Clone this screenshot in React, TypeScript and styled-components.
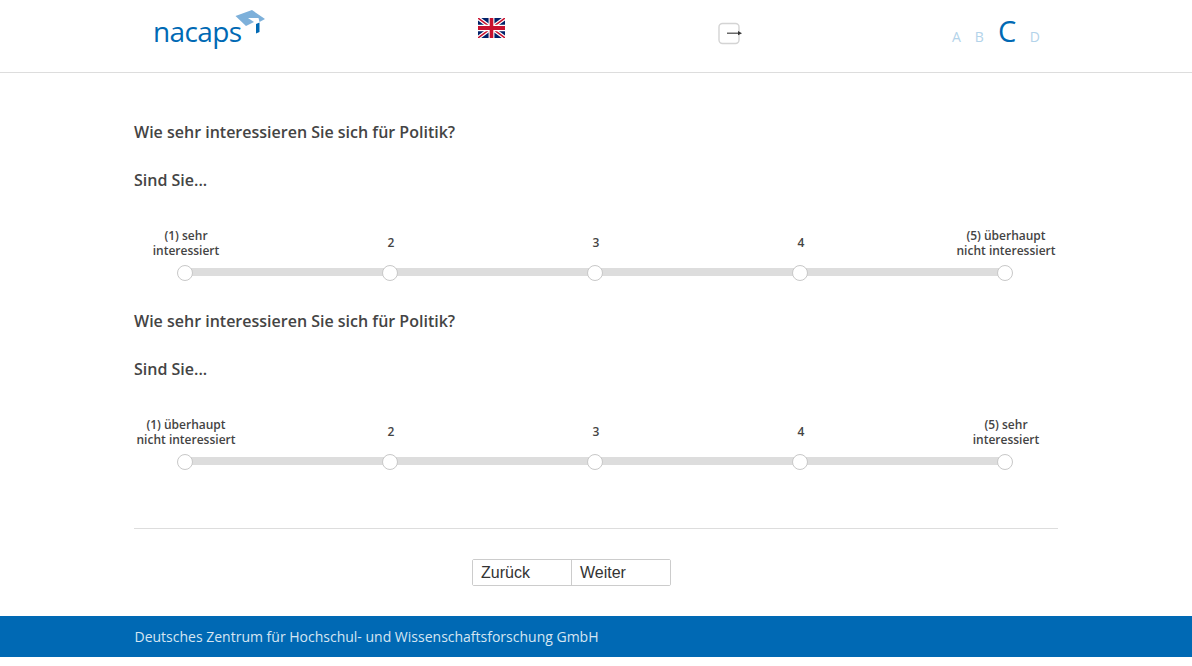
import React from 'react';
import styled, { createGlobalStyle } from 'styled-components';

const GlobalStyle = createGlobalStyle`
	html, body {
		margin: 0;
		padding: 0;
		background: #fff;
		font-family: 'Open Sans', sans-serif;
	}
`;

const Header = styled.header`
	box-sizing: border-box;
	height: 73px;
	border-bottom: 1px solid #dddddd;
	display: grid;
	grid-template-columns: 344px 240px 233px 1fr;
	padding-left: 134px;
`;

const Logo = styled.div`
	position: relative;
	padding: 12px 0 0 19px;
	color: #0069b4;
	font-family: 'Open Sans', sans-serif;
	font-size: 28px;
	line-height: 38px;
	letter-spacing: -0.6px;
	svg {
		position: absolute;
		left: 101px;
		top: 10px;
	}
`;

const FlagCell = styled.div`
	padding-top: 18px;
	svg {
		display: block;
	}
`;

const ExitCell = styled.div`
	padding-top: 22px;
	svg {
		display: block;
	}
`;

const Levels = styled.div`
	display: flex;
	align-items: baseline;
	height: 46px;
	padding: 12px 0 0 1px;
	box-sizing: border-box;
`;

const Level = styled.span<{ $active?: boolean }>`
	color: ${({ $active }) => ($active ? '#0069b4' : '#b3d3ea')};
	font-size: ${({ $active }) => ($active ? '29px' : '14px')};
	line-height: 38px;
	margin-right: ${({ $active }) => ($active ? '13.5px' : '14px')};
`;

const Main = styled.main`
	width: 924px;
	margin-left: 134px;
	padding-top: 48px;
`;

const Question = styled.h2`
	margin: 0 0 26px;
	color: #444444;
	font-size: 16px;
	font-weight: 600;
	line-height: 22px;
`;

const Scale = styled.div`
	padding-top: 11px;
	height: 79px;
	margin-bottom: 3px;
`;

const Labels = styled.div`
	display: flex;
	justify-content: space-between;
	padding: 0 2px;
	height: 29px;
	align-items: center;
`;

const Label = styled.div`
	width: 100px;
	text-align: center;
	color: #444444;
	font-size: 12px;
	font-weight: 600;
	line-height: 15px;
	white-space: nowrap;
`;

const Track = styled.div`
	position: relative;
	margin: 8px 45px 0 43px;
	height: 16px;
	display: flex;
	justify-content: space-between;
	&::before {
		content: '';
		position: absolute;
		left: 8px;
		right: 8px;
		top: 3px;
		height: 8px;
		background: #dddddd;
	}
`;

const Handle = styled.div`
	position: relative;
	box-sizing: border-box;
	width: 16px;
	height: 16px;
	border: 1px solid #c8c8c8;
	border-radius: 50%;
	background: #fff;
`;

const Divider = styled.hr`
	margin: 32px 0 30px;
	border: none;
	border-top: 1px solid #dddddd;
`;

const Buttons = styled.div`
	display: flex;
	width: 199px;
	height: 27px;
	margin-left: 338px;
	box-sizing: border-box;
	border: 1px solid #cccccc;
	border-radius: 2px;
`;

const NavButton = styled.button`
	flex: 1;
	padding: 0 0 0 8px;
	border: none;
	background: #fff;
	color: #333333;
	font-family: 'Liberation Sans', sans-serif;
	font-size: 16px;
	text-align: left;
	& + & {
		border-left: 1px solid #cccccc;
	}
`;

const Footer = styled.footer`
	margin-top: 30px;
	height: 41px;
	background: #0069b4;
	color: #d5e5f2;
	font-size: 14px;
	line-height: 41px;
	padding-left: 134.5px;
`;

const UkFlag = () => (
	<svg width="27" height="20" viewBox="0 0 60 40" preserveAspectRatio="none">
		<rect width="60" height="40" fill="#012169" />
		<path d="M0 0L60 40M60 0L0 40" stroke="#fff" strokeWidth="8" />
		<path d="M0 0L60 40M60 0L0 40" stroke="#c8102e" strokeWidth="3" />
		<path d="M30 0V40M0 20H60" stroke="#fff" strokeWidth="13" />
		<path d="M30 0V40M0 20H60" stroke="#c8102e" strokeWidth="8" />
	</svg>
);

const ExitIcon = () => (
	<svg width="25" height="24" viewBox="0 0 25 24">
		<rect x="1" y="1.5" width="20" height="20" rx="3.5" fill="#fff" stroke="#d4d4d4" strokeWidth="1.4" />
		<path d="M9 11.2H21" stroke="#444" strokeWidth="1.2" />
		<path d="M20 9L24 11.2L20 13.2Z" fill="#333" />
	</svg>
);

const Cap = () => (
	<svg width="32" height="30" viewBox="0 0 32 30">
		<path d="M0.5 6L17 0L30 9L24.5 12L23.5 8L13 8L19 12L11 16Z" fill="#7db0da" />
		<path d="M21 14L24.5 12.5V22L21 23.5Z" fill="#0069b4" />
	</svg>
);

type ScaleData = string[][];

const first: ScaleData = [
	['(1) sehr', 'interessiert'],
	['2'],
	['3'],
	['4'],
	['(5) überhaupt', 'nicht interessiert'],
];

const second: ScaleData = [
	['(1) überhaupt', 'nicht interessiert'],
	['2'],
	['3'],
	['4'],
	['(5) sehr', 'interessiert'],
];

const Item = ({ labels }: { labels: ScaleData }) => (
	<section>
		<Question>Wie sehr interessieren Sie sich für Politik?</Question>
		<Question>Sind Sie...</Question>
		<Scale>
			<Labels>
				{labels.map((lines, i) => (
					<Label key={i}>
						{lines.map((line) => (
							<div key={line}>{line}</div>
						))}
					</Label>
				))}
			</Labels>
			<Track>
				{labels.map((_, i) => (
					<Handle key={i} />
				))}
			</Track>
		</Scale>
	</section>
);

const App = () => (
	<>
		<GlobalStyle />
		<Header>
			<Logo>
				nacaps
				<Cap />
			</Logo>
			<FlagCell>
				<UkFlag />
			</FlagCell>
			<ExitCell>
				<ExitIcon />
			</ExitCell>
			<Levels>
				<Level>A</Level>
				<Level>B</Level>
				<Level $active>C</Level>
				<Level>D</Level>
			</Levels>
		</Header>
		<Main>
			<Item labels={first} />
			<Item labels={second} />
			<Divider />
			<Buttons>
				<NavButton>Zurück</NavButton>
				<NavButton>Weiter</NavButton>
			</Buttons>
		</Main>
		<Footer>Deutsches Zentrum für Hochschul- und Wissenschaftsforschung GmbH</Footer>
	</>
);

export default App;
